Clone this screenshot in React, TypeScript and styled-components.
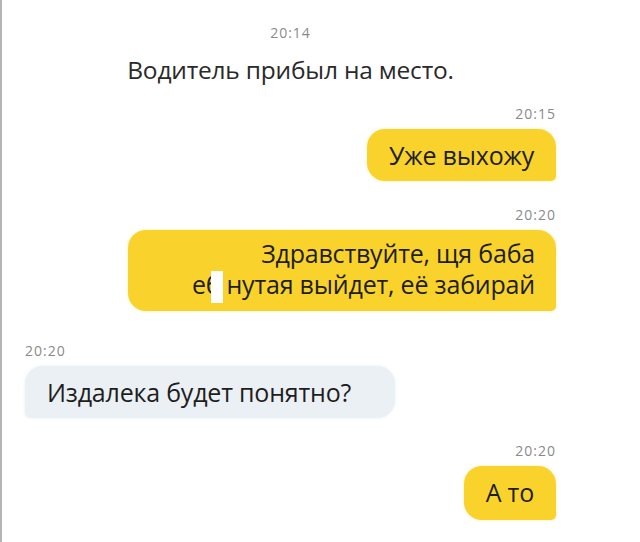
import styled, { createGlobalStyle } from 'styled-components';

type Side = 'left' | 'right' | 'center';

const GlobalStyle = createGlobalStyle`
  html, body {
    margin: 0;
    padding: 0;
    background: #ffffff;
  }
  body {
    font-family: "Open Sans", "Noto Sans", sans-serif;
    color: #202020;
  }
`;

const Screen = styled.div`
  width: 640px;
  height: 542px;
  box-sizing: border-box;
  overflow: hidden;
  background: #ffffff;
  border-left: 2px solid #b4b4b4;
  padding: 25px 84px 0 23px;
  display: flex;
  flex-direction: column;
`;

const Group = styled.div<{ $side: Side; $space?: number }>`
  display: flex;
  flex-direction: column;
  align-items: ${({ $side }) =>
    $side === 'left' ? 'flex-start' : $side === 'right' ? 'flex-end' : 'center'};
  margin-top: ${({ $space }) => $space ?? 0}px;
`;

const Time = styled.div`
  font-size: 14px;
  line-height: 16px;
  letter-spacing: 1px;
  color: #8a8a8a;
  margin-bottom: 7px;
`;

const SystemText = styled.div`
  font-size: 24.5px;
  line-height: 30px;
  letter-spacing: -0.2px;
  color: #2a2a2a;
  margin-top: 7px;
`;

const Bubble = styled.div<{ $mine?: boolean; $width?: number; $padRight?: number }>`
  box-sizing: border-box;
  width: ${({ $width }) => ($width ? `${$width}px` : 'auto')};
  padding: 11px ${({ $padRight }) => $padRight ?? 22}px 11px 22px;
  font-size: 25px;
  line-height: 30px;
  letter-spacing: -0.2px;
  text-align: right;
  color: #1e1e1e;
  background: ${({ $mine }) => ($mine ? '#f9d32c' : '#ebf0f5')};
  border-radius: ${({ $mine }) => ($mine ? '18px 18px 5px 18px' : '18px 18px 18px 5px')};
  box-shadow: 0 0 3px
    ${({ $mine }) => ($mine ? 'rgba(249, 211, 44, 0.35)' : 'rgba(210, 222, 235, 0.5)')};
`;

const TwoLineBubble = styled(Bubble)`
  padding-top: 8px;
  padding-bottom: 8px;
  line-height: 31px;
`;

const Censor = styled.span`
  display: inline-block;
  width: 12px;
  height: 32px;
  margin-left: -9px;
  margin-right: 3px;
  vertical-align: -9px;
  background: #ffffff;
`;

export default function App() {
  return (
    <>
      <GlobalStyle />
      <Screen>
        <Group $side="center">
          <Time>20:14</Time>
          <SystemText>Водитель прибыл на место.</SystemText>
        </Group>

        <Group $side="right" $space={21}>
          <Time>20:15</Time>
          <Bubble $mine>Уже выхожу</Bubble>
        </Group>

        <Group $side="right" $space={26}>
          <Time>20:20</Time>
          <TwoLineBubble $mine $width={428} $padRight={21}>
            Здравствуйте, щя баба
            <br />
            еб<Censor />нутая выйдет, её забирай
          </TwoLineBubble>
        </Group>

        <Group $side="left" $space={32}>
          <Time>20:20</Time>
          <Bubble $padRight={44}>Издалека будет понятно?</Bubble>
        </Group>

        <Group $side="right" $space={25}>
          <Time>20:20</Time>
          <Bubble $mine style={{ paddingBottom: '13px' }}>А то</Bubble>
        </Group>
      </Screen>
    </>
  );
}
